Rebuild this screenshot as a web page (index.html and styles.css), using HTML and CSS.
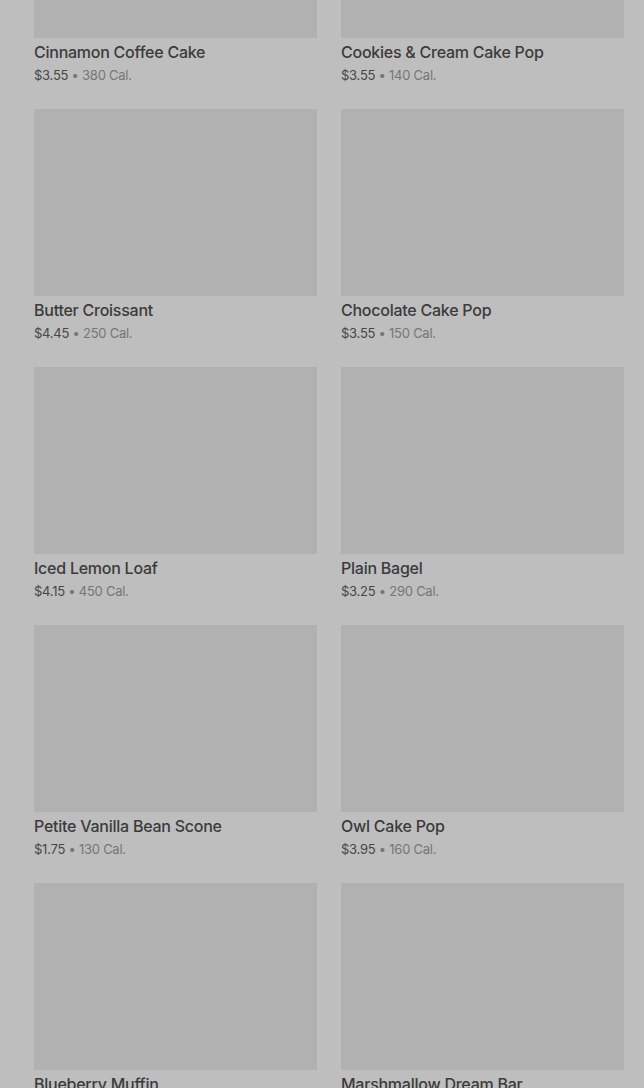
FILE: index.html
```html
<!DOCTYPE html>
<html lang="en">
  <head>
    <meta charset="UTF-8" />
    <meta name="viewport" content="width=device-width, initial-scale=1.0" />
    <title>Bakery</title>
    <link rel="stylesheet" href="styles.css">
  </head>
  <body>
    <div class="menu-grid">
      <div class="item">
        <div class="item-img"></div>
        <p class="item-name">Cinnamon Coffee Cake</p>
        <p class="item-meta"><span class="price">$3.55</span> &bull; 380 Cal.</p>
      </div>
      <div class="item">
        <div class="item-img"></div>
        <p class="item-name">Cookies &amp; Cream Cake Pop</p>
        <p class="item-meta"><span class="price">$3.55</span> &bull; 140 Cal.</p>
      </div>
      <div class="item">
        <div class="item-img"></div>
        <p class="item-name">Butter Croissant</p>
        <p class="item-meta"><span class="price">$4.45</span> &bull; 250 Cal.</p>
      </div>
      <div class="item">
        <div class="item-img"></div>
        <p class="item-name">Chocolate Cake Pop</p>
        <p class="item-meta"><span class="price">$3.55</span> &bull; 150 Cal.</p>
      </div>
      <div class="item">
        <div class="item-img"></div>
        <p class="item-name">Iced Lemon Loaf</p>
        <p class="item-meta"><span class="price">$4.15</span> &bull; 450 Cal.</p>
      </div>
      <div class="item">
        <div class="item-img"></div>
        <p class="item-name">Plain Bagel</p>
        <p class="item-meta"><span class="price">$3.25</span> &bull; 290 Cal.</p>
      </div>
      <div class="item">
        <div class="item-img"></div>
        <p class="item-name">Petite Vanilla Bean Scone</p>
        <p class="item-meta"><span class="price">$1.75</span> &bull; 130 Cal.</p>
      </div>
      <div class="item">
        <div class="item-img"></div>
        <p class="item-name">Owl Cake Pop</p>
        <p class="item-meta"><span class="price">$3.95</span> &bull; 160 Cal.</p>
      </div>
      <div class="item">
        <div class="item-img"></div>
        <p class="item-name">Blueberry Muffin</p>
        <p class="item-meta"><span class="price">$2.95</span> &bull; 360 Cal.</p>
      </div>
      <div class="item">
        <div class="item-img"></div>
        <p class="item-name">Marshmallow Dream Bar</p>
        <p class="item-meta"><span class="price">$2.45</span> &bull; 210 Cal.</p>
      </div>
    </div>
  </body>
</html>
```

FILE: styles.css
```css
body {
  margin: 0;
  background-color: #bebebe;
  font-family: "Inter", "Liberation Sans", sans-serif;
  overflow: hidden;
}
.menu-grid {
  display: grid;
  grid-template-columns: 1fr 1fr;
  column-gap: 24px;
  row-gap: 25px;
  padding: 0 20px 0 34px;
  margin-top: -149px;
}
.item-img {
  height: 187px;
  background-color: #b1b1b1;
}
.item-name {
  margin: 4px 0 0;
  font-size: 16px;
  line-height: 20px;
  font-weight: 500;
  color: #3b3b3b;
  letter-spacing: -0.25px;
}
.item-meta {
  margin: 4px 0 0;
  font-size: 13px;
  line-height: 18px;
  color: #767676;
  letter-spacing: -0.25px;
}
.price {
  color: #474747;
}
```
